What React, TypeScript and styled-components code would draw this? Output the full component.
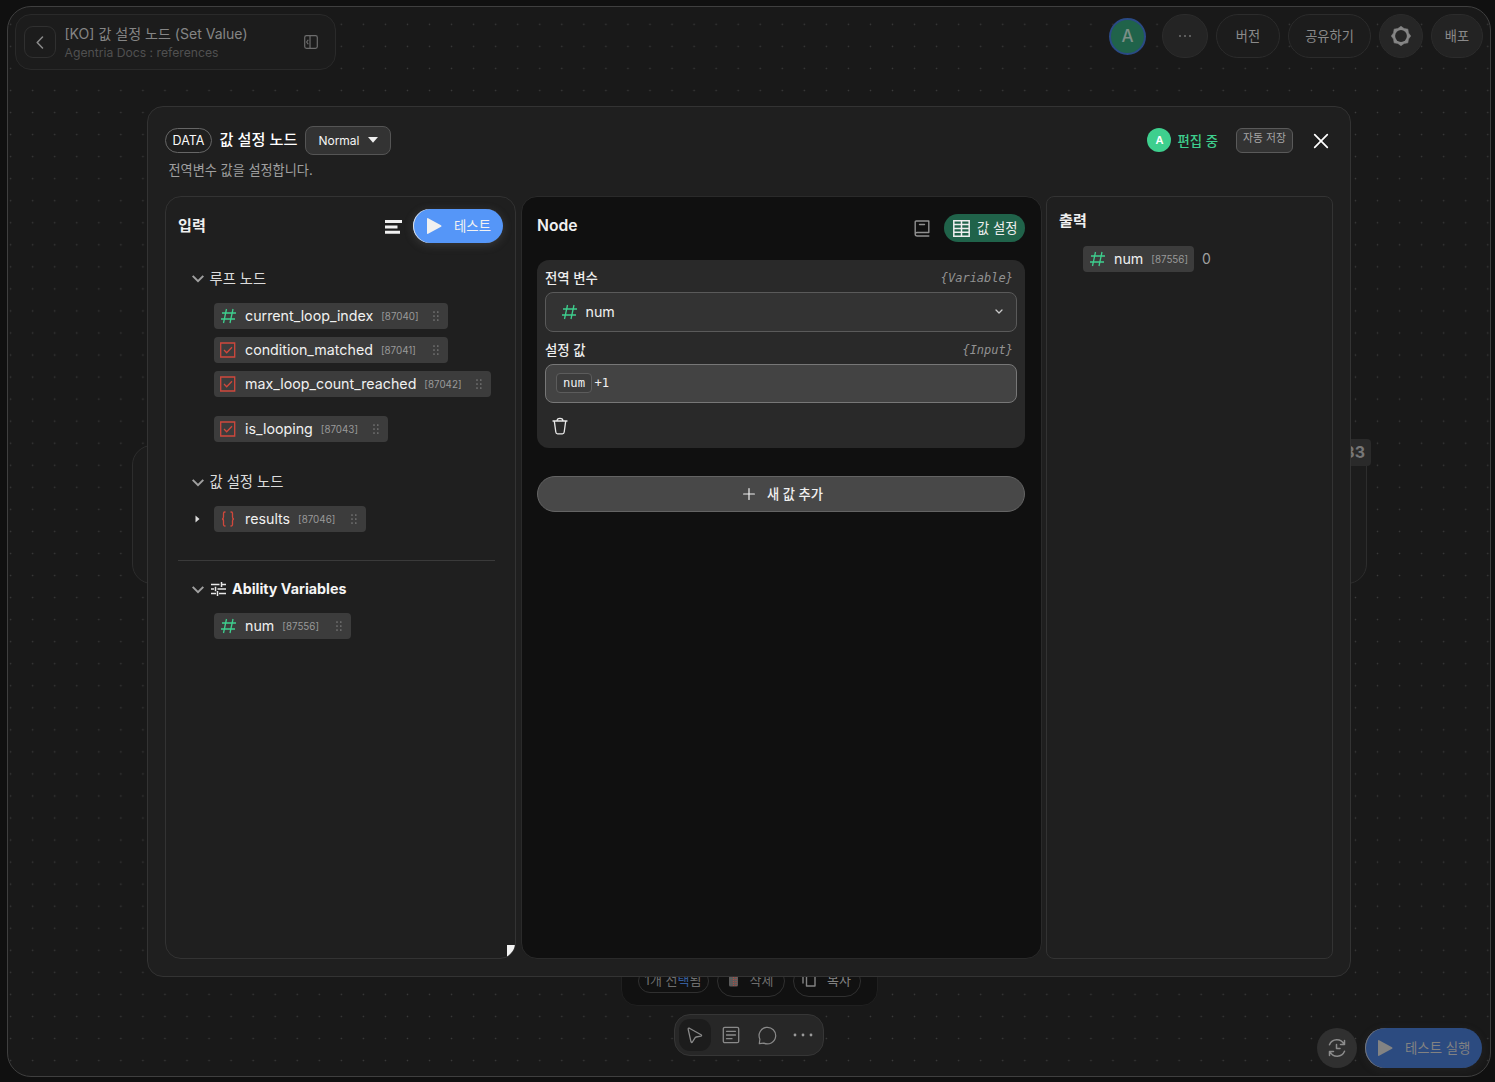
import React from "react";
import styled, { createGlobalStyle, css } from "styled-components";

const sans = `Inter, "Noto Sans CJK KR", sans-serif`;
const mono = `"DejaVu Sans Mono", "Noto Sans CJK KR", monospace`;

const GlobalStyle = createGlobalStyle`
  * { box-sizing: border-box; }
  body { margin: 0; background: #101010; font-family: ${sans}; color: #e8e8e8; overflow: hidden; }
  button { font: inherit; color: inherit; margin: 0; padding: 0; border: 0; background: none; }
  svg { display: block; flex: none; }
  h1, h2, p { margin: 0; font-weight: inherit; }
`;

/* ---------- canvas ---------- */

const Page = styled.div`
  height: 1082px;
  padding: 6px 4px 5px 7px;
`;

const Frame = styled.main`
  position: relative;
  height: 1071px;
  border: 1px solid #3f3f3f;
  border-radius: 24px;
  background-color: #191919;
  background-image: radial-gradient(circle, #3c3c3c 0.5px, transparent 1.1px);
  background-size: 22.05px 22.05px;
  background-position: -8.4px 6.3px;
  display: flex;
  flex-direction: column;
  justify-content: space-between;
  overflow: hidden;
`;

const TopBar = styled.header`
  display: flex;
  justify-content: space-between;
  align-items: flex-start;
  padding: 7px 7px 0;
`;

const DocCard = styled.div`
  display: flex;
  align-items: center;
  width: 321px;
  height: 56px;
  padding: 0 17px 0 8px;
  border: 1px solid #2a2a2a;
  border-radius: 16px;
  background: #1c1c1c;
`;

const BackButton = styled.button`
  width: 32px;
  height: 32px;
  display: grid;
  place-items: center;
  border: 1px solid #303030;
  border-radius: 9px;
  color: #8a8a8a;
`;

const DocText = styled.div`
  flex: 1;
  margin: 2px 0 0 8.5px;
`;

const DocTitle = styled.h1`
  font-size: 14.05px;
  line-height: 19px;
  color: #858585;
`;

const DocPath = styled.p`
  font-size: 12.2px;
  line-height: 19px;
  color: #505050;
`;

const TopActions = styled.div`
  display: flex;
  align-items: center;
  gap: 8px;
  height: 44px;
`;

const Avatar = styled.div<{ $size: number; $dim?: boolean }>`
  width: ${(p) => p.$size}px;
  height: ${(p) => p.$size}px;
  border-radius: 50%;
  display: grid;
  place-items: center;
  font-weight: 600;
  ${(p) =>
    p.$dim
      ? css`
          margin-right: 8px;
          background: #20634a;
          border: 2px solid #2a4a85;
          color: #7c8f87;
          font-size: 17px;
          font-weight: 500;
        `
      : css`
          background: #3ecf8e;
          color: #fff;
          font-size: 11px;
        `}
`;

const PillButton = styled.button<{ $w: number; $fill?: string; $text?: boolean }>`
  width: ${(p) => p.$w}px;
  height: 44px;
  display: grid;
  place-items: center;
  padding-bottom: ${(p) => (p.$text ? 2 : 0)}px;
  border: 1px solid #2c2c2c;
  border-radius: 22px;
  background: ${(p) => p.$fill ?? "#1c1c1c"};
  color: #8a8a8a;
  font-size: 13.2px;
`;

const CanvasNode = styled.div`
  position: absolute;
  left: 124px;
  top: 438px;
  width: 1235px;
  height: 139px;
  border: 1px solid #2d2d2d;
  border-radius: 20px;
  background: #1c1c1c;
`;

const NodeId = styled.span`
  position: absolute;
  right: -5px;
  top: -7px;
  height: 27px;
  padding: 0 6px;
  border-radius: 4px;
  background: #2a2a2a;
  color: #777;
  font-size: 16px;
  font-weight: 700;
  line-height: 27px;
`;

const BottomBar = styled.footer`
  display: grid;
  grid-template-columns: 1fr auto 1fr;
  align-items: end;
  padding: 0 8px 8px;
`;

const DockStack = styled.div`
  grid-column: 2;
  display: flex;
  flex-direction: column;
  align-items: center;
  gap: 8px;
  padding-bottom: 12px;
`;

const SelectionBar = styled.div`
  display: flex;
  align-items: center;
  gap: 8px;
  height: 50px;
  padding: 0 16px;
  border: 1px solid #202020;
  border-radius: 16px;
  background: #111;
`;

const SelectionPill = styled.div<{ $w: number; $h: number; $tone?: string }>`
  width: ${(p) => p.$w}px;
  height: ${(p) => p.$h}px;
  display: flex;
  align-items: center;
  justify-content: center;
  gap: 11px;
  padding-bottom: 3px;
  border: 1px solid #303030;
  border-radius: 16px;
  color: ${(p) => p.$tone ?? "#6e6e6e"};
  font-size: 13px;
`;

const Accent = styled.span`
  color: #365d9c;
`;

const Dock = styled.div`
  display: flex;
  align-items: center;
  gap: 4px;
  width: 150px;
  height: 42px;
  padding: 0 4px;
  border: 1px solid #363636;
  border-radius: 16px;
  background: #272727;
  color: #8a8a8a;
`;

const DockTool = styled.button<{ $active?: boolean }>`
  width: 32px;
  height: 32px;
  display: grid;
  place-items: center;
  border-radius: 11px;
  background: ${(p) => (p.$active ? "#1c1c1c" : "transparent")};
`;

const RunGroup = styled.div`
  grid-column: 3;
  justify-self: end;
  display: flex;
  gap: 8px;
`;

const HistoryButton = styled.button`
  width: 40px;
  height: 40px;
  display: grid;
  place-items: center;
  border-radius: 50%;
  background: #303030;
  color: #8c8c8c;
`;

const RunButton = styled.button<{ $large?: boolean }>`
  display: flex;
  align-items: center;
  border-radius: 20px;
  font-size: 13.4px;
  ${(p) =>
    p.$large
      ? css`
          width: 117px;
          height: 40px;
          padding-left: 13px;
          gap: 12px;
          background: #2c4b80;
          box-shadow: inset 1px 0 0 #77777a, 0 2px 10px rgba(90, 90, 90, 0.15);
          color: #828282;
        `
      : css`
          width: 90px;
          height: 34px;
          padding-left: 14px;
          gap: 12px;
          background: #5596f8;
          box-shadow: inset 1px 0 0 #e0e0e0, 0 2px 10px rgba(140, 140, 140, 0.25);
          color: #f2f2f2;
        `}
`;

const Label = styled.span<{ $lift?: number }>`
  margin-bottom: ${(p) => p.$lift ?? 2}px;
`;

/* ---------- modal ---------- */

const Overlay = styled.div`
  position: absolute;
  inset: 0;
  display: grid;
  place-items: center;
`;

const Modal = styled.section`
  width: 1204px;
  height: 871px;
  display: flex;
  flex-direction: column;
  padding: 18px 17px 17px;
  border: 1px solid #333;
  border-radius: 16px;
  background: #1f1f1f;
`;

const ModalHead = styled.div`
  display: flex;
  align-items: center;
  height: 30px;
`;

const KindPill = styled.span`
  width: 47px;
  height: 25px;
  display: grid;
  place-items: center;
  border: 1px solid #666;
  border-radius: 13px;
  font-size: 12.5px;
  color: #f8f8f8;
`;

const ModalTitle = styled.h2`
  margin: 0 7.5px 1px 7.5px;
  font-size: 15.2px;
  font-weight: 500;
  line-height: 22px;
  color: #fff;
`;

const ModeSelect = styled.button`
  width: 86px;
  height: 29px;
  display: flex;
  align-items: center;
  justify-content: center;
  gap: 8px;
  border: 1px solid #555;
  border-radius: 8px;
  background: #333;
  font-size: 12px;
  color: #f5f5f5;
`;

const EditingLabel = styled.span`
  margin: 0 18px 1px 6px;
  font-size: 13.4px;
  font-weight: 500;
  color: #3ecf8e;
`;

const AutoSave = styled.button`
  width: 57px;
  height: 25px;
  border: 1px solid #5a5a5a;
  border-radius: 6px;
  background: #333;
  color: #a5a5a5;
  font-size: 10.8px;
  line-height: 18px;
  padding-bottom: 2px;
  margin-right: 20px;
`;

const CloseButton = styled.button`
  width: 16px;
  margin: 1px 4px 0 0;
  color: #fff;
`;

const Spacer = styled.div`
  flex: 1;
`;

const ModalNote = styled.p`
  margin: 5px 0 0 3.5px;
  height: 20px;
  font-size: 13.15px;
  line-height: 20px;
  color: #a0a0a0;
`;

const Columns = styled.div`
  flex: 1;
  margin-top: 16px;
  display: grid;
  grid-template-columns: 351px 521px 287px;
  column-gap: 4.5px;
`;

const Panel = styled.div<{ $dark?: boolean }>`
  display: flex;
  flex-direction: column;
  border: 1px solid ${(p) => (p.$dark ? "#2a2a2a" : "#333")};
  border-radius: 16px;
  background: ${(p) => (p.$dark ? "#101010" : "#1f1f1f")};
`;

const InputPanel = styled(Panel)`
  position: relative;
  padding: 12px 12px 0;
  overflow: hidden;
`;

const NodePanel = styled(Panel)`
  padding: 12px 15.5px 0;
`;

const OutputPanel = styled(Panel)`
  padding: 13px 12px;
  border-radius: 8px;
`;

const PanelHead = styled.div<{ $h: number }>`
  display: flex;
  align-items: center;
  height: ${(p) => p.$h}px;
`;

const PanelTitle = styled.h2<{ $size?: number; $lift?: number }>`
  margin-bottom: ${(p) => p.$lift ?? 0}px;
  font-size: ${(p) => p.$size ?? 15.1}px;
  font-weight: 600;
  line-height: 22px;
  color: #f0f0f0;
`;

const HeadTools = styled.div<{ $gap: number }>`
  margin-left: auto;
  display: flex;
  align-items: center;
  gap: ${(p) => p.$gap}px;
`;

const SortIcon = styled.svg`
  margin-top: 2px;
`;

const BookIcon = styled.svg`
  margin-top: 1px;
`;

const ResizeCorner = styled.div`
  position: absolute;
  right: 0;
  bottom: 1px;
  width: 8px;
  height: 12px;
  border-bottom-right-radius: 10px;
  background: #f2f2f2;
`;

const GroupHead = styled.div<{ $mt: number; $bold?: boolean }>`
  display: flex;
  align-items: center;
  gap: ${(p) => (p.$bold ? 6.5 : 5.5)}px;
  height: 24px;
  margin: ${(p) => p.$mt}px 0 0 14px;
  font-size: 14.3px;
  font-weight: ${(p) => (p.$bold ? 700 : 400)};
  color: ${(p) => (p.$bold ? "#f5f5f5" : "#dcdcdc")};
`;

const ChevronSvg = styled.svg`
  margin-top: 2px;
`;

const ChipList = styled.div<{ $mt: number }>`
  display: flex;
  flex-direction: column;
  gap: 8.2px;
  margin: ${(p) => p.$mt}px 0 0 14px;
`;

const ChipRow = styled.div<{ $mt?: number }>`
  display: flex;
  align-items: center;
  margin-top: ${(p) => p.$mt ?? 0}px;
`;

const ExpandSlot = styled.span`
  width: 22px;
  padding-left: 3px;
`;

const Chip = styled.span<{ $w: number }>`
  width: ${(p) => p.$w}px;
  height: 26px;
  display: flex;
  align-items: center;
  padding: 0 8px 0 6px;
  border-radius: 4px;
  background: #3c3c3c;
`;

const ChipName = styled.span`
  margin: 0 0 1px 8px;
  font-size: 14.25px;
  color: #f0f0f0;
`;

const ChipId = styled.span`
  margin: 1px auto 0 8px;
  font-size: 9.8px;
  color: #999;
`;

const Divider = styled.hr`
  width: 317px;
  height: 1px;
  margin: 28px 0 0;
  border: 0;
  background: #3a3a3a;
`;

const ModeBadge = styled.button`
  width: 81px;
  height: 28px;
  display: flex;
  align-items: center;
  gap: 7px;
  padding-left: 9px;
  border-radius: 14px;
  background: #20634a;
  font-size: 13.3px;
  color: #eee;
`;

const Card = styled.div`
  height: 188px;
  margin-top: 13px;
  padding: 8px 8px 0;
  border-radius: 12px;
  background: #292929;
`;

const FieldLabel = styled.div`
  display: flex;
  justify-content: space-between;
  align-items: center;
  height: 20px;
  padding-right: 4px;
  font-size: 13.4px;
  font-weight: 500;
  color: #eee;
`;

const FieldKind = styled.em`
  font-family: ${mono};
  font-size: 12px;
  font-weight: 400;
  color: #929292;
`;

const SelectBox = styled.div`
  display: flex;
  align-items: center;
  height: 40px;
  margin: 4px 0 8px;
  padding: 0 12px 0 14.5px;
  border: 1px solid #5a5a5a;
  border-radius: 8px;
  background: #333;
`;

const ValueBox = styled.div`
  display: flex;
  align-items: center;
  gap: 2.5px;
  height: 39px;
  margin-top: 4px;
  padding: 0 0 1px 10px;
  border: 1px solid #777;
  border-radius: 8px;
  background: #434343;
  font-family: ${mono};
  font-size: 12.2px;
  color: #f0f0f0;
`;

const Token = styled.span`
  width: 36px;
  height: 20px;
  display: grid;
  place-items: center;
  border: 1px solid #5c5c5c;
  border-radius: 4px;
  background: #3c3c3c;
`;

const TrashButton = styled.button`
  margin: 14px 0 0 7px;
  color: #e8e8e8;
`;

const AddButton = styled.button`
  display: flex;
  align-items: center;
  justify-content: center;
  gap: 12px;
  height: 36px;
  margin-top: 28px;
  padding-left: 4px;
  border: 1px solid #646464;
  border-radius: 18px;
  background: #484848;
  font-size: 13.3px;
  font-weight: 500;
  color: #f0f0f0;
`;

const OutputRow = styled.div`
  display: flex;
  align-items: center;
  gap: 8px;
  margin: 14px 0 0 24px;
  font-size: 14px;
  color: #a0a0a0;
`;

/* ---------- icons ---------- */

const stroke = { fill: "none", stroke: "currentColor", strokeLinecap: "round", strokeLinejoin: "round" } as const;

const HashIcon = () => (
  <svg width="17" height="16" viewBox="0 0 17 16" fill="none" stroke="#3ecf8e" strokeWidth="1.3">
    <path d="M6.500 1 3.500 15M13 1l-3 14M2 5h14M1 11h14" />
  </svg>
);

const CheckIcon = () => (
  <svg width="17" height="16" viewBox="0 0 17 16" fill="none" stroke="#d0483c" strokeWidth="1.3">
    <path d="M.7 1h14v14H.7z" />
    <path d="m4 8 2.700 2.700L12 5.200" />
  </svg>
);

const BracesIcon = () => (
  <svg width="17" height="16" viewBox="0 0 17 16" fill="none" stroke="#d0483c" strokeWidth="1.3">
    <path d="M5.500 1H4.700Q3.500 1 3.500 2.500V6Q3.500 8 2 8Q3.500 8 3.500 10V13.500Q3.500 15 4.700 15H5.500M10.500 1H11.300Q12.500 1 12.500 2.500V6Q12.500 8 14 8Q12.500 8 12.500 10V13.500Q12.500 15 11.300 15H10.500" />
  </svg>
);

const GripIcon = () => (
  <svg width="8" height="10" viewBox="0 0 8 10" fill="#7c7c7c">
    {[1, 5, 9].map((y) => (
      <React.Fragment key={y}>
        <circle cx="2" cy={y} r="0.85" />
        <circle cx="5.800" cy={y} r="0.85" />
      </React.Fragment>
    ))}
  </svg>
);

const GroupChevron = () => (
  <ChevronSvg width="12" height="8" viewBox="0 0 12 8" fill="none" stroke="#a0a0a0" strokeWidth="2">
    <path d="m.7.9 5.300 5.200L11.300.9" />
  </ChevronSvg>
);

const PlayIcon = ({ size, color }: { size: number; color: string }) => (
  <svg width={size} height={size + 1} viewBox="0 0 15 16" fill={color}>
    <path d="M0 .8Q0-.300 1.100.2L14 7.200Q15 8 14 8.800L1.100 15.800Q0 16.300 0 15.200Z" />
  </svg>
);

const TuneIcon = () => (
  <svg width="15" height="14" viewBox="0 0 15 14" fill="none" stroke="#e8e8e8" strokeWidth="1.5">
    <path d="M0 2.500h8.500M10.500 2.500H15M10.500 0v5M0 7h3M4.500 4.700v4.600M6.500 7H15M0 11.500h5M6.500 9v5M8 11.500h7" />
  </svg>
);

const GearIcon = () => {
  const points = Array.from({ length: 16 }, (_, i) => {
    const r = i % 2 ? 8.1 : 9.7;
    const a = (i * Math.PI) / 8;
    return `${(10 + r * Math.sin(a)).toFixed(2)},${(10 - r * Math.cos(a)).toFixed(2)}`;
  }).join(" ");
  return (
    <svg width="20" height="20" viewBox="0 0 20 20">
      <polygon points={points} fill="#858585" stroke="#858585" strokeWidth=".6" strokeLinejoin="round" />
      <circle cx="10" cy="10" r="5.900" fill="#262626" />
    </svg>
  );
};

/* ---------- data ---------- */

type Kind = "number" | "boolean" | "object";
type Variable = { name: string; id: string; kind: Kind; width: number; extra?: number; expandable?: boolean };

const loopVars: Variable[] = [
  { name: "current_loop_index", id: "87040", kind: "number", width: 234 },
  { name: "condition_matched", id: "87041", kind: "boolean", width: 234 },
  { name: "max_loop_count_reached", id: "87042", kind: "boolean", width: 277 },
  { name: "is_looping", id: "87043", kind: "boolean", width: 174, extra: 10 },
];
const setVars: Variable[] = [{ name: "results", id: "87046", kind: "object", width: 152, expandable: true }];
const abilityVars: Variable[] = [{ name: "num", id: "87556", kind: "number", width: 137 }];

const kindIcons: Record<Kind, React.FC> = { number: HashIcon, boolean: CheckIcon, object: BracesIcon };

const VariableChip = ({ v, grip = true }: { v: Variable; grip?: boolean }) => {
  const Icon = kindIcons[v.kind];
  return (
    <Chip $w={v.width}>
      <Icon />
      <ChipName>{v.name}</ChipName>
      <ChipId>[{v.id}]</ChipId>
      {grip && <GripIcon />}
    </Chip>
  );
};

const Variables = ({ items, mt }: { items: Variable[]; mt: number }) => (
  <ChipList $mt={mt}>
    {items.map((v) => (
      <ChipRow key={v.id} $mt={v.extra}>
        <ExpandSlot>
          {v.expandable && (
            <svg width="5" height="8" viewBox="0 0 5 8" fill="#ddd">
              <path d="M.5.500 4.500 4 .5 7.500z" />
            </svg>
          )}
        </ExpandSlot>
        <VariableChip v={v} />
      </ChipRow>
    ))}
  </ChipList>
);

export default function App() {
  return (
    <Page>
      <GlobalStyle />
      <Frame>
        <TopBar>
          <DocCard>
            <BackButton>
              <svg width="8" height="13" viewBox="0 0 8 13" {...stroke} strokeWidth="1.5">
                <path d="M6.500 1 1.200 6.500l5.300 5.500" />
              </svg>
            </BackButton>
            <DocText>
              <DocTitle>[KO] 값 설정 노드 (Set Value)</DocTitle>
              <DocPath>Agentria Docs : references</DocPath>
            </DocText>
            <svg width="14" height="14" viewBox="0 0 14 14" {...stroke} stroke="#6c6c6c" strokeWidth="1.2">
              <rect x=".7" y=".7" width="12.600" height="12.600" rx="1.800" />
              <path d="M6 1v12M4 5.200 2.600 7 4 8.800" />
            </svg>
          </DocCard>
          <TopActions>
            <Avatar $size={37} $dim>A</Avatar>
            <PillButton $w={46} $fill="#242424">
              <svg width="14" height="4" viewBox="0 0 14 4" fill="#707070">
                <circle cx="2" cy="2" r="1" /><circle cx="7" cy="2" r="1" /><circle cx="12" cy="2" r="1" />
              </svg>
            </PillButton>
            <PillButton $w={64} $text>버전</PillButton>
            <PillButton $w={83} $text>공유하기</PillButton>
            <PillButton $w={44} $fill="#262626"><GearIcon /></PillButton>
            <PillButton $w={52} $fill="#232323" $text>배포</PillButton>
          </TopActions>
        </TopBar>

        <CanvasNode>
          <NodeId>87033</NodeId>
        </CanvasNode>

        <BottomBar>
          <DockStack>
            <SelectionBar>
              <SelectionPill $w={71} $h={24}><span>1개 선<Accent>택</Accent>됨</span></SelectionPill>
              <SelectionPill $w={68} $h={32}>
                <svg width="11" height="15" viewBox="0 0 11 15">
                  <path d="M1 3h9v10q0 1.500-1.500 1.500h-6Q1 14.500 1 13z" fill="#5c5c5c" />
                  <path d="M5.500 3v11M8 3v11" stroke="#b04a40" strokeWidth="1.200" strokeDasharray="1 1" />
                </svg>
                삭제
              </SelectionPill>
              <SelectionPill $w={68} $h={32} $tone="#838383">
                <svg width="14" height="15" viewBox="0 0 14 15" {...stroke} strokeWidth="1.400">
                  <path d="M4.500 3.500h8.500v10.500H4.500zM1 11V1h9" />
                </svg>
                복사
              </SelectionPill>
            </SelectionBar>
            <Dock>
              <DockTool $active>
                <svg width="16" height="17" viewBox="0 0 16 17" {...stroke} strokeWidth="1.300">
                  <path d="M1.200 2.300 4 14.800q.5 1.400 1.400.2L8 10.800q.4-.6 1.200-.8l4.700-.9q1.300-.5.200-1.400L2.400 1.200Q1 .8 1.200 2.300z" />
                </svg>
              </DockTool>
              <DockTool>
                <svg width="18" height="18" viewBox="0 0 18 18" {...stroke} strokeWidth="1.300">
                  <rect x="1.300" y="1.300" width="15.400" height="15.400" rx="1.500" />
                  <path d="M4.500 5.300h9M4.500 9h9M4.500 12.700h5.500" />
                </svg>
              </DockTool>
              <DockTool>
                <svg width="19" height="19" viewBox="0 0 19 19" {...stroke} strokeWidth="1.200">
                  <path d="M1.300 17.700 1.900 13.200A8.300 8.300 0 1 1 5.800 17.100z" />
                </svg>
              </DockTool>
              <DockTool>
                <svg width="20" height="4" viewBox="0 0 20 4" fill="#9a9a9a">
                  <circle cx="2" cy="2" r="1.400" /><circle cx="10" cy="2" r="1.400" /><circle cx="18" cy="2" r="1.400" />
                </svg>
              </DockTool>
            </Dock>
          </DockStack>
          <RunGroup>
            <HistoryButton>
              <svg width="20" height="18" viewBox="0 0 20 18" {...stroke} strokeWidth="1.500">
                <path d="M2.500 5.800A8 8 0 0 1 17 5.200M17.500 1.500V5.500H13.500M17.500 12.200A8 8 0 0 1 3 12.800M2.500 16.500V12.500H6.500M9.500 5.500V9.500H13" />
              </svg>
            </HistoryButton>
            <RunButton $large>
              <PlayIcon size={15} color="#838383" />
              <Label>테스트 실행</Label>
            </RunButton>
          </RunGroup>
        </BottomBar>

        <Overlay>
          <Modal>
            <ModalHead>
              <KindPill>DATA</KindPill>
              <ModalTitle>값 설정 노드</ModalTitle>
              <ModeSelect>
                Normal
                <svg width="10" height="6" viewBox="0 0 10 6" fill="#eee"><path d="M0 0h10L5 5.800z" /></svg>
              </ModeSelect>
              <Spacer />
              <Avatar $size={24}>A</Avatar>
              <EditingLabel>편집 중</EditingLabel>
              <AutoSave>자동 저장</AutoSave>
              <CloseButton>
                <svg width="16" height="16" viewBox="0 0 16 16" {...stroke} strokeWidth="1.700"><path d="m1.700 1.700 12.600 12.600M14.300 1.700 1.700 14.300" /></svg>
              </CloseButton>
            </ModalHead>
            <ModalNote>전역변수 값을 설정합니다.</ModalNote>

            <Columns>
              <InputPanel>
                <PanelHead $h={34}>
                  <PanelTitle>입력</PanelTitle>
                  <HeadTools $gap={11}>
                    <SortIcon width="17" height="14" viewBox="0 0 17 14" fill="#f0f0f0">
                      <path d="M0 0h17v3H0zM0 5.400h12.500v3H0zM0 10.800h15v3H0z" />
                    </SortIcon>
                    <RunButton>
                      <PlayIcon size={15} color="#f0f0f0" />
                      <Label>테스트</Label>
                    </RunButton>
                  </HeadTools>
                </PanelHead>
                <GroupHead $mt={23}><GroupChevron /><Label>루프 노드</Label></GroupHead>
                <Variables items={loopVars} mt={13} />
                <GroupHead $mt={28}><GroupChevron /><Label>값 설정 노드</Label></GroupHead>
                <Variables items={setVars} mt={12} />
                <Divider />
                <GroupHead $mt={16} $bold><GroupChevron /><TuneIcon /><Label $lift={1}>Ability Variables</Label></GroupHead>
                <Variables items={abilityVars} mt={12} />
                <ResizeCorner />
              </InputPanel>

              <NodePanel $dark>
                <PanelHead $h={38}>
                  <PanelTitle $size={15.7} $lift={5}>Node</PanelTitle>
                  <HeadTools $gap={14}>
                    <BookIcon width="16" height="17" viewBox="0 0 16 17" {...stroke} stroke="#909090" strokeWidth="1.400">
                      <path d="M14.800 12.500V1H2.200q-1 0-1 1v12q0 2 2 2h11.600M1.200 14q0-1.500 1.800-1.500h11.800M5.500 4.500h5" />
                    </BookIcon>
                    <ModeBadge>
                      <svg width="17" height="17" viewBox="0 0 17 17" fill="none" stroke="#eee" strokeWidth="1.500">
                        <path d="M.8.800h15.400v15.400H.8zM.8 4.600h15.400M.8 8.500h15.400M.8 12.300h15.400M8.500.800v15.400" />
                      </svg>
                      <Label>값 설정</Label>
                    </ModeBadge>
                  </HeadTools>
                </PanelHead>
                <Card>
                  <FieldLabel><Label $lift={2}>전역 변수</Label><FieldKind>{"{Variable}"}</FieldKind></FieldLabel>
                  <SelectBox>
                    <HashIcon />
                    <ChipName>num</ChipName>
                    <Spacer />
                    <svg width="10" height="6" viewBox="0 0 10 6" {...stroke} stroke="#c8c8c8" strokeWidth="1.300"><path d="m2 1 3 3 3-3" /></svg>
                  </SelectBox>
                  <FieldLabel><Label $lift={2}>설정 값</Label><FieldKind>{"{Input}"}</FieldKind></FieldLabel>
                  <ValueBox><Token>num</Token>+1</ValueBox>
                  <TrashButton>
                    <svg width="16" height="18" viewBox="0 0 16 18" {...stroke} strokeWidth="1.300">
                      <path d="M1 4h14M5 4q0-2.700 3-2.700t3 2.700M2.300 4.200 3.800 15q.2 1.800 1.800 1.800h4.800q1.600 0 1.800-1.800l1.500-10.800" />
                    </svg>
                  </TrashButton>
                </Card>
                <AddButton>
                  <svg width="12" height="12" viewBox="0 0 12 12" {...stroke} strokeWidth="1.200"><path d="M6 .600v10.800M.6 6h10.800" /></svg>
                  <Label>새 값 추가</Label>
                </AddButton>
              </NodePanel>

              <OutputPanel>
                <PanelHead $h={22}><PanelTitle>출력</PanelTitle></PanelHead>
                <OutputRow>
                  <VariableChip v={{ ...abilityVars[0], width: 111 }} grip={false} />
                  <Label>0</Label>
                </OutputRow>
              </OutputPanel>
            </Columns>
          </Modal>
        </Overlay>
      </Frame>
    </Page>
  );
}
